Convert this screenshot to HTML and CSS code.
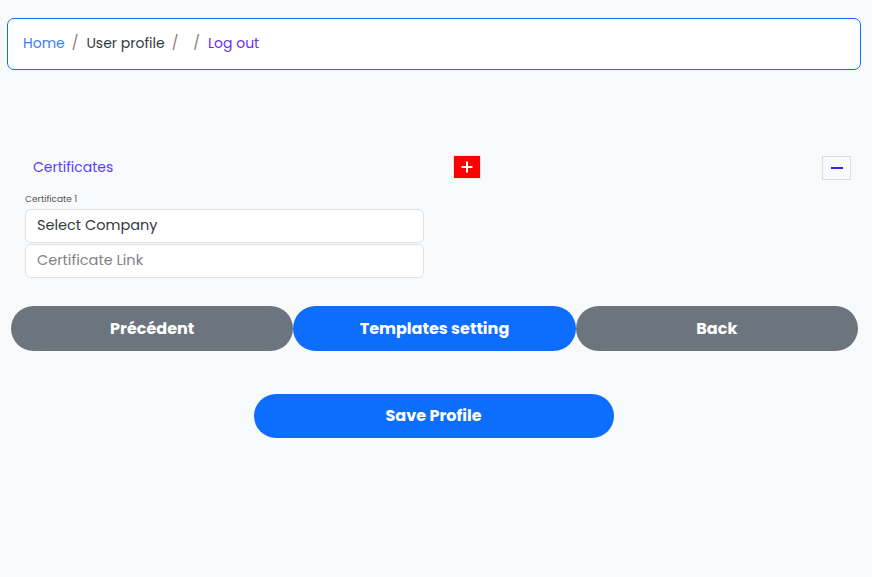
FILE: index.html
```html
<!DOCTYPE html>
<html lang="en">
<head>
<meta charset="utf-8">
<title>User profile</title>
<link rel="stylesheet" href="styles.css">
</head>
<body>
<nav class="crumbs">
  <a class="crumb home" href="#">Home</a>
  <span class="sep">/</span>
  <span class="crumb current">User profile</span>
  <span class="sep">/</span>
  <span class="crumb empty"></span>
  <span class="sep">/</span>
  <a class="crumb logout" href="#">Log out</a>
</nav>

<main class="page">
  <section class="certs">
    <div class="certs-head">
      <div class="certs-left">
        <span class="certs-title">Certificates</span>
        <button class="btn-add" type="button" aria-label="Add">
          <svg width="12" height="12" viewBox="0 0 12 12"><path d="M6 0.5v11M0.5 6h11" stroke="#fff" stroke-width="2"/></svg>
        </button>
      </div>
      <button class="btn-remove" type="button" aria-label="Remove">
        <svg width="12" height="4" viewBox="0 0 12 4"><path d="M0 2h12" stroke="#3b1ff0" stroke-width="2"/></svg>
      </button>
    </div>
    <div class="cert-item">
      <label class="cert-label">Certificate 1</label>
      <div class="field">Select Company</div>
      <input class="field input" type="text" placeholder="Certificate Link">
    </div>
  </section>

  <div class="actions">
    <button class="pill grey" type="button">Précédent</button>
    <button class="pill blue" type="button">Templates setting</button>
    <button class="pill grey" type="button">Back</button>
  </div>

  <div class="save-row">
    <button class="pill blue save" type="button">Save Profile</button>
  </div>
</main>
</body>
</html>
```

FILE: styles.css
```css
* { box-sizing: border-box; }

html, body {
  margin: 0;
  background: #f8f9fa;
  font-family: Poppins, "Open Sans", "Noto Sans", sans-serif;
  color: #212529;
}

body {
  padding: 18px 11px 0 7px;
}

.crumbs {
  display: flex;
  align-items: center;
  height: 52px;
  padding: 0 15px 2px;
  background: #fff;
  border: 1px solid #0d6efd;
  border-radius: 7px;
  font-size: 14px;
}

.crumb { text-decoration: none; }
.home { color: #3d7dfc; }
.current { color: #343a40; }
.logout { color: #6a2ff0; }
.empty { width: 0; }
.sep {
  color: #8a7b70;
  margin: 0 8px 0 7px;
}

.page {
  padding: 86px 0 0 4px;
}

.certs {
  padding: 0 10px 0 14px;
}

.certs-head {
  display: flex;
  justify-content: space-between;
  align-items: center;
  height: 24px;
}

.certs-left {
  width: 456px;
  display: flex;
  justify-content: space-between;
  align-items: center;
  padding-left: 8px;
  padding-bottom: 2px;
}

.certs-title {
  color: #5a3ff0;
  font-size: 14px;
}

.btn-add {
  width: 28px;
  height: 24px;
  padding: 0;
  border: 1px solid #e6e6e6;
  background: #ff0000;
  display: flex;
  align-items: center;
  justify-content: center;
}

.btn-remove {
  width: 29px;
  height: 24px;
  padding: 0;
  border: 1px solid #dcdde0;
  background: #f8f9fa;
  display: flex;
  align-items: center;
  justify-content: center;
}

.cert-item {
  display: flex;
  flex-direction: column;
  width: 399px;
  margin-top: 13px;
}

.cert-label {
  font-size: 9px;
  color: #555;
  margin-bottom: 4px;
  line-height: 12px;
}

.field {
  height: 34px;
  border: 1px solid #dee2e6;
  border-radius: 6px;
  background: #fff;
  padding: 0 11px 2px;
  display: flex;
  align-items: center;
  font-family: inherit;
  font-size: 14.5px;
  color: #343a40;
  width: 100%;
}

.field + .field { margin-top: 1px; }

.input { outline: none; }
.input::placeholder { color: #808488; }

.actions {
  display: flex;
  margin-top: 28px;
  width: 847px;
}

.pill {
  flex: 1;
  height: 45px;
  border: none;
  border-radius: 23px;
  color: #fff;
  font-family: inherit;
  font-weight: 700;
  font-size: 16px;
  padding-bottom: 2px;
  cursor: pointer;
}

.grey { background: #6c757d; }
.blue { background: #0d6efd; }

.save-row {
  width: 845px;
  display: flex;
  justify-content: center;
  margin-top: 43px;
}

.save {
  flex: 0 0 360px;
  height: 44px;
}
```
